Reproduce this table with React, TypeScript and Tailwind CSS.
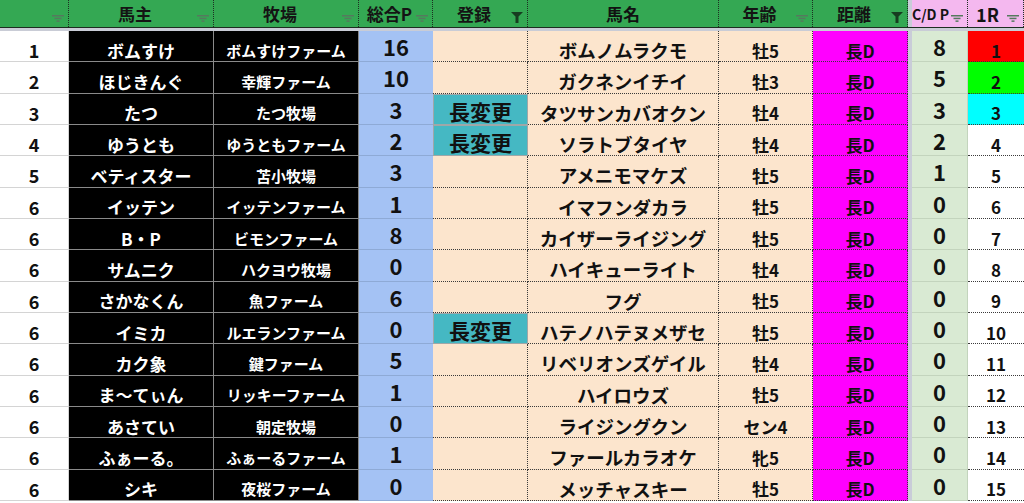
import React from "react";

type Row = {
  rank: number;
  owner: string;
  farm: string;
  total: number;
  reg: string;
  horse: string;
  age: string;
  dist: string;
  cdp: number;
  r1: number;
};

const rows: Row[] = [
  { rank: 1, owner: "ボムすけ", farm: "ボムすけファーム", total: 16, reg: "", horse: "ボムノムラクモ", age: "牡5", dist: "長D", cdp: 8, r1: 1 },
  { rank: 2, owner: "ほじきんぐ", farm: "幸輝ファーム", total: 10, reg: "", horse: "ガクネンイチイ", age: "牡3", dist: "長D", cdp: 5, r1: 2 },
  { rank: 3, owner: "たつ", farm: "たつ牧場", total: 3, reg: "長変更", horse: "タツサンカバオクン", age: "牡4", dist: "長D", cdp: 3, r1: 3 },
  { rank: 4, owner: "ゆうとも", farm: "ゆうともファーム", total: 2, reg: "長変更", horse: "ソラトブタイヤ", age: "牡4", dist: "長D", cdp: 2, r1: 4 },
  { rank: 5, owner: "ベティスター", farm: "苫小牧場", total: 3, reg: "", horse: "アメニモマケズ", age: "牡5", dist: "長D", cdp: 1, r1: 5 },
  { rank: 6, owner: "イッテン", farm: "イッテンファーム", total: 1, reg: "", horse: "イマフンダカラ", age: "牡5", dist: "長D", cdp: 0, r1: 6 },
  { rank: 6, owner: "B・P", farm: "ビモンファーム", total: 8, reg: "", horse: "カイザーライジング", age: "牡5", dist: "長D", cdp: 0, r1: 7 },
  { rank: 6, owner: "サムニク", farm: "ハクヨウ牧場", total: 0, reg: "", horse: "ハイキューライト", age: "牡4", dist: "長D", cdp: 0, r1: 8 },
  { rank: 6, owner: "さかなくん", farm: "魚ファーム", total: 6, reg: "", horse: "フグ", age: "牡5", dist: "長D", cdp: 0, r1: 9 },
  { rank: 6, owner: "イミカ", farm: "ルエランファーム", total: 0, reg: "長変更", horse: "ハテノハテヌメザセ", age: "牡5", dist: "長D", cdp: 0, r1: 10 },
  { rank: 6, owner: "カク象", farm: "鍵ファーム", total: 5, reg: "", horse: "リベリオンズゲイル", age: "牡4", dist: "長D", cdp: 0, r1: 11 },
  { rank: 6, owner: "ま〜てぃん", farm: "リッキーファーム", total: 1, reg: "", horse: "ハイロウズ", age: "牡5", dist: "長D", cdp: 0, r1: 12 },
  { rank: 6, owner: "あさてい", farm: "朝定牧場", total: 0, reg: "", horse: "ライジングクン", age: "セン4", dist: "長D", cdp: 0, r1: 13 },
  { rank: 6, owner: "ふぁーる。", farm: "ふぁーるファーム", total: 1, reg: "", horse: "ファールカラオケ", age: "牝5", dist: "長D", cdp: 0, r1: 14 },
  { rank: 6, owner: "シキ", farm: "夜桜ファーム", total: 0, reg: "", horse: "メッチャスキー", age: "牡5", dist: "長D", cdp: 0, r1: 15 },
];

const cols =
  "grid grid-cols-[69px_145px_145px_74px_95px_191px_94px_95px_4px_56px_56px]";

function FilterIcon({ active }: { active?: boolean }) {
  if (active) {
    return (
      <svg width="12" height="11" viewBox="0 0 12 11" className="shrink-0">
        <path d="M0 0 H12 L7.5 4.5 V11 H4.5 V4.5 Z" fill="#173d20" />
      </svg>
    );
  }
  return (
    <svg width="12" height="7" viewBox="0 0 12 7" className="shrink-0">
      <rect x="0" y="0" width="12" height="1.5" fill="#557a5e" />
      <rect x="2.5" y="2.7" width="7" height="1.5" fill="#557a5e" />
      <rect x="4.5" y="5.4" width="3" height="1.5" fill="#557a5e" />
    </svg>
  );
}

function Head({
  label,
  active,
  pink,
  small,
}: {
  label: string;
  active?: boolean;
  pink?: boolean;
  small?: boolean;
}) {
  return (
    <div
      className={
        "flex items-center pr-1 border-r border-dotted border-[#1e2e22] " +
        (pink ? "bg-[#f4b8ef] pl-0" : "bg-[#34a853] pl-1")
      }
    >
      <span
        className={
          "flex-1 font-bold text-[#141414] leading-none " +
          (small ? "text-[14px] text-left" : pink ? "text-[18px] text-center" : "text-[17px] text-center")
        }
      >
        {label}
      </span>
      <span className={active ? "mt-2" : "mt-2.5"}>
        <FilterIcon active={active} />
      </span>
    </div>
  );
}

const cell = "flex items-center justify-center font-bold leading-none";
const low = " pt-2";
const dotted = "border-b border-r border-dotted border-[#3a3a3a]";

function rColor(n: number) {
  if (n === 1) return "bg-[#ff0000]";
  if (n === 2) return "bg-[#00ff00]";
  if (n === 3) return "bg-[#00ffff]";
  return "bg-white";
}

export default function App() {
  return (
    <div
      className="w-[1024px] h-[503px] overflow-hidden bg-white text-[#111]"
      style={{ fontFamily: '"Noto Sans CJK JP", "Noto Sans", sans-serif' }}
    >
      <div className={cols + " h-[28px] border-b border-[#1d2e21]"}>
        <Head label="" />
        <Head label="馬主" />
        <Head label="牧場" />
        <Head label="総合P" />
        <Head label="登録" active />
        <div className="bg-[#34a853] border-r border-dotted border-[#1e2e22] flex items-center justify-center text-[17px] font-bold leading-none">
          馬名
        </div>
        <Head label="年齢" />
        <Head label="距離" active />
        <div className="bg-[#c9ccd8]" />
        <Head label="C/D P" pink small />
        <Head label="1R" pink />
      </div>
      <div className="h-[3px] bg-[#c9ccd6]" />
      {rows.map((r, i) => (
        <div key={i} className={cols + " h-[31.33px]"}>
          <div className={cell + low + " bg-white border-b border-r border-[#d4d4d4] text-[18px]"}>
            {r.rank}
          </div>
          <div className={cell + low + " bg-black text-white border-b border-r border-[#8a8a8a] text-[17px]"}>
            {r.owner}
          </div>
          <div className={cell + low + " bg-black text-white border-b border-r border-[#8a8a8a] text-[15px]"}>
            {r.farm}
          </div>
          <div className={cell + " bg-[#a4c2f4] border-b border-[#8eaad6] text-[22px]"}>
            {r.total}
          </div>
          {r.reg ? (
            <div className={cell + " pt-1 bg-[#45b8c3] border border-[#9fa7a8] text-[21px]"}>
              {r.reg}
            </div>
          ) : (
            <div className={cell + " bg-[#fce5cd] " + dotted} />
          )}
          <div className={cell + low + " bg-[#fce5cd] text-[18.5px] " + dotted}>
            {r.horse}
          </div>
          <div className={cell + low + " bg-[#fce5cd] text-[17px] " + dotted}>
            {r.age}
          </div>
          <div className={cell + low + " bg-[#ff00ff] text-[17px] " + dotted}>
            {r.dist}
          </div>
          <div className="bg-[#c9ccd8]" />
          <div className={cell + " bg-[#d9ead3] border-b border-r border-[#c3d4bd] text-[22px]"}>
            {r.cdp}
          </div>
          <div className={cell + low + " text-[17px] border-b border-dotted border-[#3a3a3a] " + rColor(r.r1)}>
            {r.r1}
          </div>
        </div>
      ))}
    </div>
  );
}
